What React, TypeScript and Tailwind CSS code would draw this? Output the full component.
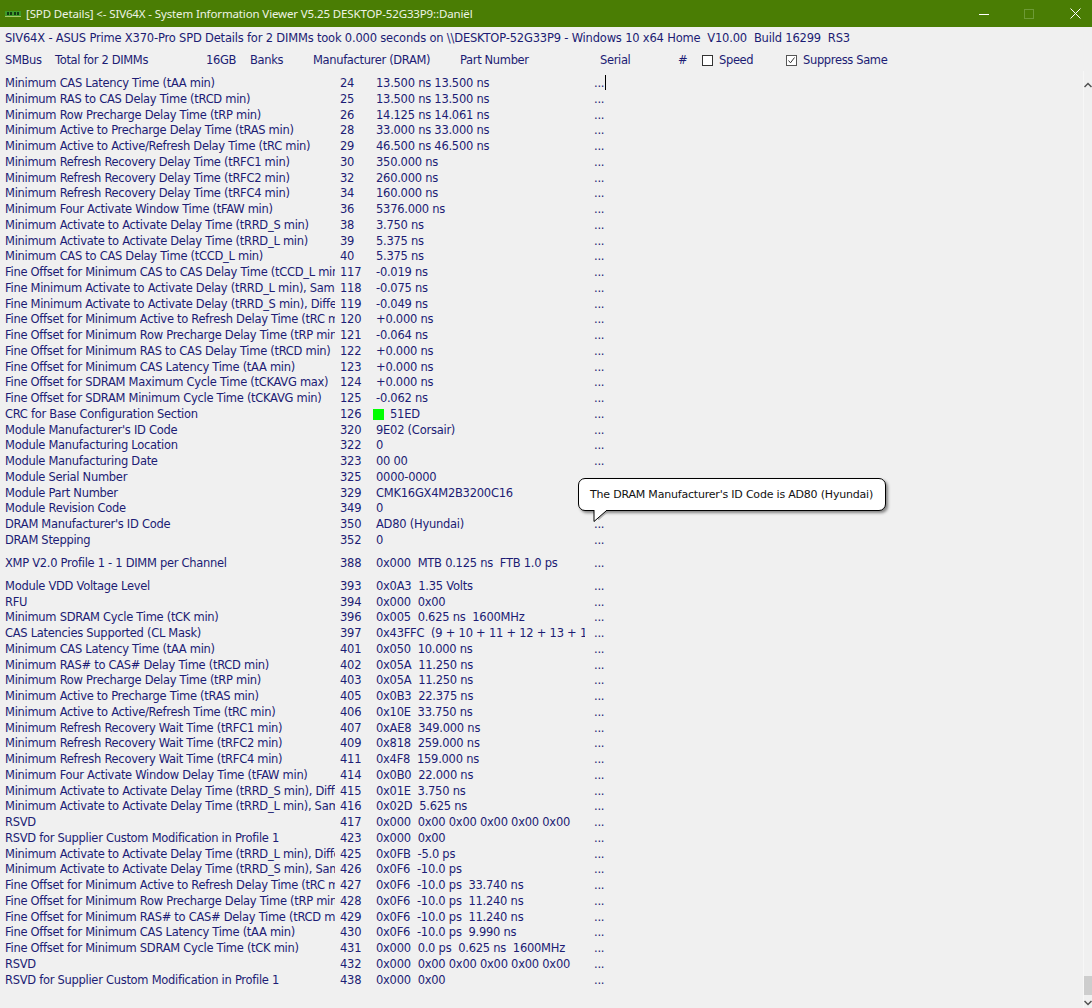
const rows: [string, string, string][] = [
  ["Minimum CAS Latency Time (tAA min)", "24", "13.500 ns 13.500 ns"],
  ["Minimum RAS to CAS Delay Time (tRCD min)", "25", "13.500 ns 13.500 ns"],
  ["Minimum Row Precharge Delay Time (tRP min)", "26", "14.125 ns 14.061 ns"],
  ["Minimum Active to Precharge Delay Time (tRAS min)", "28", "33.000 ns 33.000 ns"],
  ["Minimum Active to Active/Refresh Delay Time (tRC min)", "29", "46.500 ns 46.500 ns"],
  ["Minimum Refresh Recovery Delay Time (tRFC1 min)", "30", "350.000 ns"],
  ["Minimum Refresh Recovery Delay Time (tRFC2 min)", "32", "260.000 ns"],
  ["Minimum Refresh Recovery Delay Time (tRFC4 min)", "34", "160.000 ns"],
  ["Minimum Four Activate Window Time (tFAW min)", "36", "5376.000 ns"],
  ["Minimum Activate to Activate Delay Time (tRRD_S min)", "38", "3.750 ns"],
  ["Minimum Activate to Activate Delay Time (tRRD_L min)", "39", "5.375 ns"],
  ["Minimum CAS to CAS Delay Time (tCCD_L min)", "40", "5.375 ns"],
  ["Fine Offset for Minimum CAS to CAS Delay Time (tCCD_L min)", "117", "-0.019 ns"],
  ["Fine Minimum Activate to Activate Delay (tRRD_L min), Same Bank", "118", "-0.075 ns"],
  ["Fine Minimum Activate to Activate Delay (tRRD_S min), Different Bank", "119", "-0.049 ns"],
  ["Fine Offset for Minimum Active to Refresh Delay Time (tRC min)", "120", "+0.000 ns"],
  ["Fine Offset for Minimum Row Precharge Delay Time (tRP min)", "121", "-0.064 ns"],
  ["Fine Offset for Minimum RAS to CAS Delay Time (tRCD min)", "122", "+0.000 ns"],
  ["Fine Offset for Minimum CAS Latency Time (tAA min)", "123", "+0.000 ns"],
  ["Fine Offset for SDRAM Maximum Cycle Time (tCKAVG max)", "124", "+0.000 ns"],
  ["Fine Offset for SDRAM Minimum Cycle Time (tCKAVG min)", "125", "-0.062 ns"],
  ["CRC for Base Configuration Section", "126", "#51ED"],
  ["Module Manufacturer's ID Code", "320", "9E02 (Corsair)"],
  ["Module Manufacturing Location", "322", "0"],
  ["Module Manufacturing Date", "323", "00 00"],
  ["Module Serial Number", "325", "0000-0000"],
  ["Module Part Number", "329", "CMK16GX4M2B3200C16"],
  ["Module Revision Code", "349", "0"],
  ["DRAM Manufacturer's ID Code", "350", "AD80 (Hyundai)"],
  ["DRAM Stepping", "352", "0"],
];

const xmp: [string, string, string] = ["XMP V2.0 Profile 1 - 1 DIMM per Channel", "388", "0x000  MTB 0.125 ns  FTB 1.0 ps"];

const rows2: [string, string, string][] = [
  ["Module VDD Voltage Level", "393", "0x0A3  1.35 Volts"],
  ["RFU", "394", "0x000  0x00"],
  ["Minimum SDRAM Cycle Time (tCK min)", "396", "0x005  0.625 ns  1600MHz"],
  ["CAS Latencies Supported (CL Mask)", "397", "0x43FFC  (9 + 10 + 11 + 12 + 13 + 14 + 15 + 16)"],
  ["Minimum CAS Latency Time (tAA min)", "401", "0x050  10.000 ns"],
  ["Minimum RAS# to CAS# Delay Time (tRCD min)", "402", "0x05A  11.250 ns"],
  ["Minimum Row Precharge Delay Time (tRP min)", "403", "0x05A  11.250 ns"],
  ["Minimum Active to Precharge Time (tRAS min)", "405", "0x0B3  22.375 ns"],
  ["Minimum Active to Active/Refresh Time (tRC min)", "406", "0x10E  33.750 ns"],
  ["Minimum Refresh Recovery Wait Time (tRFC1 min)", "407", "0xAE8  349.000 ns"],
  ["Minimum Refresh Recovery Wait Time (tRFC2 min)", "409", "0x818  259.000 ns"],
  ["Minimum Refresh Recovery Wait Time (tRFC4 min)", "411", "0x4F8  159.000 ns"],
  ["Minimum Four Activate Window Delay Time (tFAW min)", "414", "0x0B0  22.000 ns"],
  ["Minimum Activate to Activate Delay Time (tRRD_S min), Different", "415", "0x01E  3.750 ns"],
  ["Minimum Activate to Activate Delay Time (tRRD_L min), Same", "416", "0x02D  5.625 ns"],
  ["RSVD", "417", "0x000  0x00 0x00 0x00 0x00 0x00"],
  ["RSVD for Supplier Custom Modification in Profile 1", "423", "0x000  0x00"],
  ["Minimum Activate to Activate Delay Time (tRRD_L min), Different", "425", "0x0FB  -5.0 ps"],
  ["Minimum Activate to Activate Delay Time (tRRD_S min), Same", "426", "0x0F6  -10.0 ps"],
  ["Fine Offset for Minimum Active to Refresh Delay Time (tRC min)", "427", "0x0F6  -10.0 ps  33.740 ns"],
  ["Fine Offset for Minimum Row Precharge Delay Time (tRP min)", "428", "0x0F6  -10.0 ps  11.240 ns"],
  ["Fine Offset for Minimum RAS# to CAS# Delay Time (tRCD min)", "429", "0x0F6  -10.0 ps  11.240 ns"],
  ["Fine Offset for Minimum CAS Latency Time (tAA min)", "430", "0x0F6  -10.0 ps  9.990 ns"],
  ["Fine Offset for Minimum SDRAM Cycle Time (tCK min)", "431", "0x000  0.0 ps  0.625 ns  1600MHz"],
  ["RSVD", "432", "0x000  0x00 0x00 0x00 0x00 0x00"],
  ["RSVD for Supplier Custom Modification in Profile 1", "438", "0x000  0x00"],
];

function Row({ row, caret, className = "" }: { row: [string, string, string]; caret?: boolean; className?: string }) {
  const [label, num, value] = row;
  const crc = value.startsWith("#");
  return (
    <div className={`flex h-[15.75px] items-center leading-[15.75px] whitespace-pre ${className}`}>
      <div className="w-[330px] ml-[5px] mr-[5px] overflow-hidden shrink-0 tracking-[-0.29px]">{label}</div>
      <div className="w-[33px] shrink-0">{num}</div>
      <div className="w-[212px] mr-[9px] overflow-hidden shrink-0 flex items-center">
        {crc ? (
          <>
            <span className="w-[11px] h-[11px] bg-[#00ff00] mr-[6px] shrink-0" />
            <span>{value.slice(1)}</span>
          </>
        ) : (
          <span className="pl-[3px]">{value}</span>
        )}
      </div>
      <div className="relative w-[14px] shrink-0">
        ...
        {caret && <span className="absolute left-[11px] -top-[1px] h-[15px] w-px bg-black" />}
      </div>
    </div>
  );
}

function Box({ checked }: { checked?: boolean }) {
  return (
    <span className={`w-[11px] h-[11px] shrink-0 flex items-center justify-center border bg-white ${checked ? "border-[#555555]" : "border-[#333333]"}`}>
      {checked && (
        <svg width="9" height="9" viewBox="0 0 9 9" fill="none" stroke="#333333" strokeWidth="1">
          <path d="M1.5 4.5 L3.5 6.8 L7.5 1.5" />
        </svg>
      )}
    </span>
  );
}

export default function App() {
  return (
    <div
      className="relative w-[1092px] h-[1008px] overflow-hidden bg-[#f0f0f0] text-[#1c1c74] text-[11.5px] tracking-[-0.25px]"
      style={{ fontFamily: '"DejaVu Sans", Verdana, sans-serif' }}
    >
      <div
        className="h-[27px] bg-[#4a7d04] flex items-center text-[#eef4e4] text-[11.5px] tracking-[-0.13px]"
        style={{ fontFamily: '"Noto Sans", sans-serif' }}
      >
        <svg className="ml-[5px] mr-[5px] shrink-0" width="16" height="6" viewBox="0 0 16 6">
          <rect width="16" height="6" fill="#3f9a2a" />
          <rect x="2" y="1" width="2" height="3" fill="#123a12" />
          <rect x="5" y="1" width="2" height="3" fill="#123a12" />
          <rect x="9" y="1" width="2" height="3" fill="#123a12" />
          <rect x="12" y="1" width="2" height="3" fill="#123a12" />
          <rect y="5" width="16" height="1" fill="#a8c96a" />
        </svg>
        <span className="whitespace-pre">[SPD Details] &lt;- SIV64X - System Information Viewer V5.25 DESKTOP-52G33P9::Daniël</span>
        <div className="ml-auto flex items-center">
          <svg width="10" height="10" viewBox="0 0 10 10" className="mr-[35px]"><path d="M0 5.5H10" stroke="#ffffff" strokeWidth="1" /></svg>
          <svg width="10" height="10" viewBox="0 0 10 10" className="mr-[36px]"><rect x="0.5" y="0.5" width="9" height="9" fill="none" stroke="#6d9a36" /></svg>
          <svg width="11" height="11" viewBox="0 0 11 11" className="mr-[11px]"><path d="M0.5 0.5L10.5 10.5M10.5 0.5L0.5 10.5" stroke="#ffffff" strokeWidth="1" /></svg>
        </div>
      </div>

      <div className="h-[22px] flex items-center pl-[5px] pt-px whitespace-pre tracking-[-0.19px]">
        SIV64X - ASUS Prime X370-Pro SPD Details for 2 DIMMs took 0.000 seconds on \\DESKTOP-52G33P9 - Windows 10 x64 Home  V10.00  Build 16299  RS3
      </div>

      <div className="h-[22px] flex items-center pl-[5px] pt-px whitespace-pre tracking-[-0.35px]">
        <span className="w-[50px]">SMBus</span>
        <span className="w-[151px]">Total for 2 DIMMs</span>
        <span className="w-[44px]">16GB</span>
        <span className="w-[63px]">Banks</span>
        <span className="w-[147px]">Manufacturer (DRAM)</span>
        <span className="w-[140px]">Part Number</span>
        <span className="w-[78px]">Serial</span>
        <span className="w-[24px]">#</span>
        <Box />
        <span className="w-[67px] ml-[6px]">Speed</span>
        <Box checked />
        <span className="ml-[6px]">Suppress Same</span>
      </div>

      <div className="flex h-[937px]">
        <div className="flex-1 pt-[5px]">
          {rows.map((r, i) => (
            <Row key={i} row={r} caret={i === 0} />
          ))}
          <Row row={xmp} className="mt-[7.5px] mb-[7px]" />
          {rows2.map((r, i) => (
            <Row key={i} row={r} />
          ))}
        </div>
        <div className="w-[9px] shrink-0 flex flex-col items-center border-l border-[#f7f7f7]">
          <svg className="mt-[11px] shrink-0" width="8" height="6" viewBox="0 0 8 6" fill="none" stroke="#505050" strokeWidth="1.5">
            <path d="M0.5 5L4 1.5L7.5 5" />
          </svg>
          <div className="flex-1" />
          <div className="w-full h-[19px] bg-[#cdcdcd] shrink-0" />
          <svg className="mt-[5px] mb-[2px] shrink-0" width="8" height="6" viewBox="0 0 8 6" fill="none" stroke="#505050" strokeWidth="1.5">
            <path d="M0.5 1L4 4.5L7.5 1" />
          </svg>
        </div>
      </div>

      <div className="absolute left-[578px] top-[478px] w-[308px] h-[33px] rounded-[7px] border border-black bg-white text-[#111111] text-[11px] tracking-[-0.2px] pt-px flex items-center pl-[11px] whitespace-pre shadow-[2px_2px_3px_rgba(0,0,0,0.45)]">
        The DRAM Manufacturer's ID Code is AD80 (Hyundai)
      </div>
      <svg className="absolute left-[593px] top-[510px]" width="18" height="13" viewBox="0 0 18 13">
        <path d="M3 0 L13 0 L4 8 L3 8 Z" fill="#9a9a9a" transform="translate(2 2)" opacity="0.7" />
        <path d="M1 0 L1 11.5 L13 1 L13 0" fill="#ffffff" />
        <path d="M1 0 L1 11.5 L13 1" fill="none" stroke="#000000" strokeWidth="1" />
      </svg>
    </div>
  );
}
